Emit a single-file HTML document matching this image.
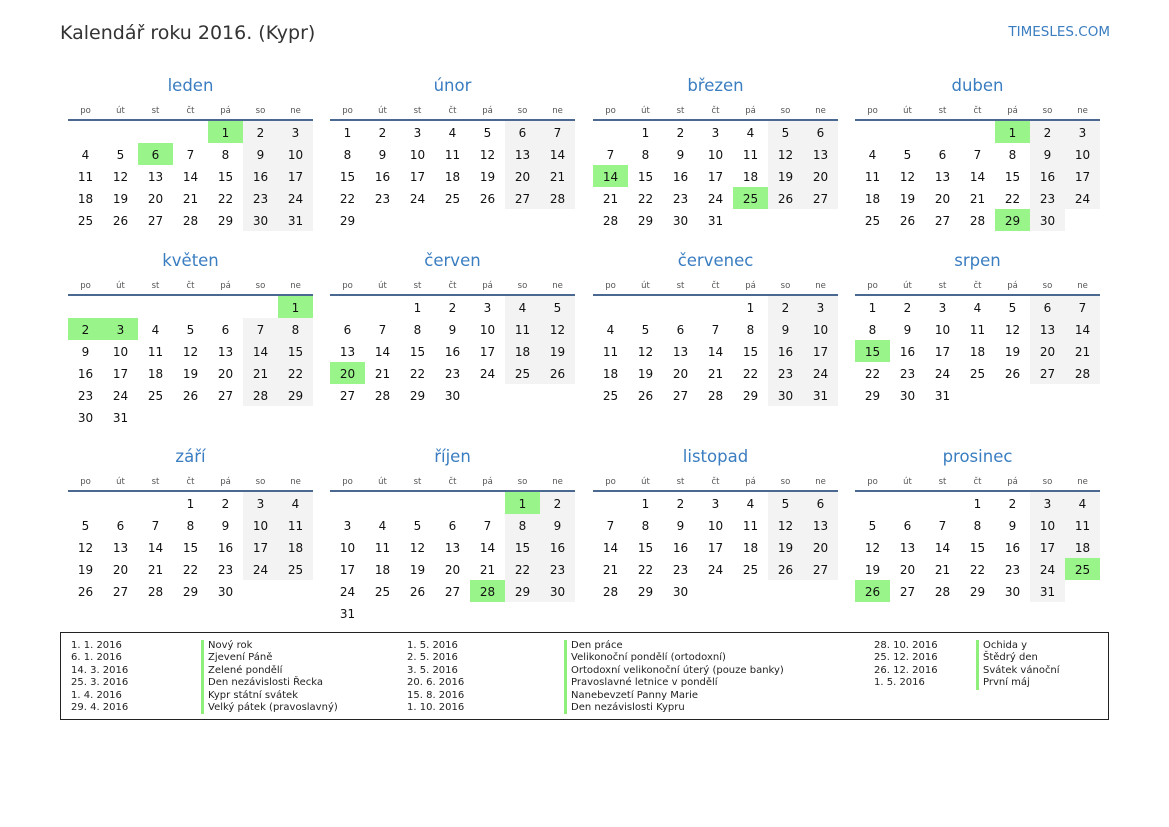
<!DOCTYPE html>
<html><head><meta charset="utf-8"><style>
body{margin:0;width:1169px;height:827px;background:#fff;position:relative;font-family:"DejaVu Sans","Liberation Sans",sans-serif;color:#111;overflow:hidden}
.t{position:absolute;left:60px;top:19px;font-size:19px;color:#333;line-height:28px}
.s{position:absolute;right:59px;top:24px;font-size:13.5px;color:#3a7dc0}
.m{position:absolute;width:245px}
.mt{height:24px;line-height:26px;text-align:center;font-size:16.5px;color:#3a7dc0}
.hd{display:flex;height:22px;line-height:28px;border-bottom:2px solid #4a6890;font-size:8.5px;color:#555}
.hd span{width:35px;text-align:center}
table{border-collapse:collapse;border-spacing:0}
td{width:35px;height:21px;padding:1px 0 0 0;text-align:center;font-size:12px;line-height:20px}
td.w{background:#f3f3f3}
td.h{background:#99f58a}
.lg{position:absolute;left:60px;top:632px;width:1047px;height:86px;border:1.5px solid #222}
.c{position:absolute;top:7px;font-size:10px;line-height:12.4px;color:#222;white-space:nowrap}
.b{border-left:3px solid #8ef07a;padding-left:4px}
</style></head><body>
<div class="t">Kalendář roku 2016. (Kypr)</div>
<div class="s">TIMESLES.COM</div>

<div class="m" style="left:68px;top:73px"><div class="mt">leden</div><div class="hd"><span>po</span><span>út</span><span>st</span><span>čt</span><span>pá</span><span>so</span><span>ne</span></div><table>
<tr><td></td><td></td><td></td><td></td><td class="h">1</td><td class="w">2</td><td class="w">3</td></tr>
<tr><td>4</td><td>5</td><td class="h">6</td><td>7</td><td>8</td><td class="w">9</td><td class="w">10</td></tr>
<tr><td>11</td><td>12</td><td>13</td><td>14</td><td>15</td><td class="w">16</td><td class="w">17</td></tr>
<tr><td>18</td><td>19</td><td>20</td><td>21</td><td>22</td><td class="w">23</td><td class="w">24</td></tr>
<tr><td>25</td><td>26</td><td>27</td><td>28</td><td>29</td><td class="w">30</td><td class="w">31</td></tr></table></div>

<div class="m" style="left:330px;top:73px"><div class="mt">únor</div><div class="hd"><span>po</span><span>út</span><span>st</span><span>čt</span><span>pá</span><span>so</span><span>ne</span></div><table>
<tr><td>1</td><td>2</td><td>3</td><td>4</td><td>5</td><td class="w">6</td><td class="w">7</td></tr>
<tr><td>8</td><td>9</td><td>10</td><td>11</td><td>12</td><td class="w">13</td><td class="w">14</td></tr>
<tr><td>15</td><td>16</td><td>17</td><td>18</td><td>19</td><td class="w">20</td><td class="w">21</td></tr>
<tr><td>22</td><td>23</td><td>24</td><td>25</td><td>26</td><td class="w">27</td><td class="w">28</td></tr>
<tr><td>29</td><td></td><td></td><td></td><td></td><td></td><td></td></tr></table></div>

<div class="m" style="left:593px;top:73px"><div class="mt">březen</div><div class="hd"><span>po</span><span>út</span><span>st</span><span>čt</span><span>pá</span><span>so</span><span>ne</span></div><table>
<tr><td></td><td>1</td><td>2</td><td>3</td><td>4</td><td class="w">5</td><td class="w">6</td></tr>
<tr><td>7</td><td>8</td><td>9</td><td>10</td><td>11</td><td class="w">12</td><td class="w">13</td></tr>
<tr><td class="h">14</td><td>15</td><td>16</td><td>17</td><td>18</td><td class="w">19</td><td class="w">20</td></tr>
<tr><td>21</td><td>22</td><td>23</td><td>24</td><td class="h">25</td><td class="w">26</td><td class="w">27</td></tr>
<tr><td>28</td><td>29</td><td>30</td><td>31</td><td></td><td></td><td></td></tr></table></div>

<div class="m" style="left:855px;top:73px"><div class="mt">duben</div><div class="hd"><span>po</span><span>út</span><span>st</span><span>čt</span><span>pá</span><span>so</span><span>ne</span></div><table>
<tr><td></td><td></td><td></td><td></td><td class="h">1</td><td class="w">2</td><td class="w">3</td></tr>
<tr><td>4</td><td>5</td><td>6</td><td>7</td><td>8</td><td class="w">9</td><td class="w">10</td></tr>
<tr><td>11</td><td>12</td><td>13</td><td>14</td><td>15</td><td class="w">16</td><td class="w">17</td></tr>
<tr><td>18</td><td>19</td><td>20</td><td>21</td><td>22</td><td class="w">23</td><td class="w">24</td></tr>
<tr><td>25</td><td>26</td><td>27</td><td>28</td><td class="h">29</td><td class="w">30</td><td></td></tr></table></div>

<div class="m" style="left:68px;top:248px"><div class="mt">květen</div><div class="hd"><span>po</span><span>út</span><span>st</span><span>čt</span><span>pá</span><span>so</span><span>ne</span></div><table>
<tr><td></td><td></td><td></td><td></td><td></td><td></td><td class="h">1</td></tr>
<tr><td class="h">2</td><td class="h">3</td><td>4</td><td>5</td><td>6</td><td class="w">7</td><td class="w">8</td></tr>
<tr><td>9</td><td>10</td><td>11</td><td>12</td><td>13</td><td class="w">14</td><td class="w">15</td></tr>
<tr><td>16</td><td>17</td><td>18</td><td>19</td><td>20</td><td class="w">21</td><td class="w">22</td></tr>
<tr><td>23</td><td>24</td><td>25</td><td>26</td><td>27</td><td class="w">28</td><td class="w">29</td></tr>
<tr><td>30</td><td>31</td><td></td><td></td><td></td><td></td><td></td></tr></table></div>

<div class="m" style="left:330px;top:248px"><div class="mt">červen</div><div class="hd"><span>po</span><span>út</span><span>st</span><span>čt</span><span>pá</span><span>so</span><span>ne</span></div><table>
<tr><td></td><td></td><td>1</td><td>2</td><td>3</td><td class="w">4</td><td class="w">5</td></tr>
<tr><td>6</td><td>7</td><td>8</td><td>9</td><td>10</td><td class="w">11</td><td class="w">12</td></tr>
<tr><td>13</td><td>14</td><td>15</td><td>16</td><td>17</td><td class="w">18</td><td class="w">19</td></tr>
<tr><td class="h">20</td><td>21</td><td>22</td><td>23</td><td>24</td><td class="w">25</td><td class="w">26</td></tr>
<tr><td>27</td><td>28</td><td>29</td><td>30</td><td></td><td></td><td></td></tr></table></div>

<div class="m" style="left:593px;top:248px"><div class="mt">červenec</div><div class="hd"><span>po</span><span>út</span><span>st</span><span>čt</span><span>pá</span><span>so</span><span>ne</span></div><table>
<tr><td></td><td></td><td></td><td></td><td>1</td><td class="w">2</td><td class="w">3</td></tr>
<tr><td>4</td><td>5</td><td>6</td><td>7</td><td>8</td><td class="w">9</td><td class="w">10</td></tr>
<tr><td>11</td><td>12</td><td>13</td><td>14</td><td>15</td><td class="w">16</td><td class="w">17</td></tr>
<tr><td>18</td><td>19</td><td>20</td><td>21</td><td>22</td><td class="w">23</td><td class="w">24</td></tr>
<tr><td>25</td><td>26</td><td>27</td><td>28</td><td>29</td><td class="w">30</td><td class="w">31</td></tr></table></div>

<div class="m" style="left:855px;top:248px"><div class="mt">srpen</div><div class="hd"><span>po</span><span>út</span><span>st</span><span>čt</span><span>pá</span><span>so</span><span>ne</span></div><table>
<tr><td>1</td><td>2</td><td>3</td><td>4</td><td>5</td><td class="w">6</td><td class="w">7</td></tr>
<tr><td>8</td><td>9</td><td>10</td><td>11</td><td>12</td><td class="w">13</td><td class="w">14</td></tr>
<tr><td class="h">15</td><td>16</td><td>17</td><td>18</td><td>19</td><td class="w">20</td><td class="w">21</td></tr>
<tr><td>22</td><td>23</td><td>24</td><td>25</td><td>26</td><td class="w">27</td><td class="w">28</td></tr>
<tr><td>29</td><td>30</td><td>31</td><td></td><td></td><td></td><td></td></tr></table></div>

<div class="m" style="left:68px;top:444px"><div class="mt">září</div><div class="hd"><span>po</span><span>út</span><span>st</span><span>čt</span><span>pá</span><span>so</span><span>ne</span></div><table>
<tr><td></td><td></td><td></td><td>1</td><td>2</td><td class="w">3</td><td class="w">4</td></tr>
<tr><td>5</td><td>6</td><td>7</td><td>8</td><td>9</td><td class="w">10</td><td class="w">11</td></tr>
<tr><td>12</td><td>13</td><td>14</td><td>15</td><td>16</td><td class="w">17</td><td class="w">18</td></tr>
<tr><td>19</td><td>20</td><td>21</td><td>22</td><td>23</td><td class="w">24</td><td class="w">25</td></tr>
<tr><td>26</td><td>27</td><td>28</td><td>29</td><td>30</td><td></td><td></td></tr></table></div>

<div class="m" style="left:330px;top:444px"><div class="mt">říjen</div><div class="hd"><span>po</span><span>út</span><span>st</span><span>čt</span><span>pá</span><span>so</span><span>ne</span></div><table>
<tr><td></td><td></td><td></td><td></td><td></td><td class="h">1</td><td class="w">2</td></tr>
<tr><td>3</td><td>4</td><td>5</td><td>6</td><td>7</td><td class="w">8</td><td class="w">9</td></tr>
<tr><td>10</td><td>11</td><td>12</td><td>13</td><td>14</td><td class="w">15</td><td class="w">16</td></tr>
<tr><td>17</td><td>18</td><td>19</td><td>20</td><td>21</td><td class="w">22</td><td class="w">23</td></tr>
<tr><td>24</td><td>25</td><td>26</td><td>27</td><td class="h">28</td><td class="w">29</td><td class="w">30</td></tr>
<tr><td>31</td><td></td><td></td><td></td><td></td><td></td><td></td></tr></table></div>

<div class="m" style="left:593px;top:444px"><div class="mt">listopad</div><div class="hd"><span>po</span><span>út</span><span>st</span><span>čt</span><span>pá</span><span>so</span><span>ne</span></div><table>
<tr><td></td><td>1</td><td>2</td><td>3</td><td>4</td><td class="w">5</td><td class="w">6</td></tr>
<tr><td>7</td><td>8</td><td>9</td><td>10</td><td>11</td><td class="w">12</td><td class="w">13</td></tr>
<tr><td>14</td><td>15</td><td>16</td><td>17</td><td>18</td><td class="w">19</td><td class="w">20</td></tr>
<tr><td>21</td><td>22</td><td>23</td><td>24</td><td>25</td><td class="w">26</td><td class="w">27</td></tr>
<tr><td>28</td><td>29</td><td>30</td><td></td><td></td><td></td><td></td></tr></table></div>

<div class="m" style="left:855px;top:444px"><div class="mt">prosinec</div><div class="hd"><span>po</span><span>út</span><span>st</span><span>čt</span><span>pá</span><span>so</span><span>ne</span></div><table>
<tr><td></td><td></td><td></td><td>1</td><td>2</td><td class="w">3</td><td class="w">4</td></tr>
<tr><td>5</td><td>6</td><td>7</td><td>8</td><td>9</td><td class="w">10</td><td class="w">11</td></tr>
<tr><td>12</td><td>13</td><td>14</td><td>15</td><td>16</td><td class="w">17</td><td class="w">18</td></tr>
<tr><td>19</td><td>20</td><td>21</td><td>22</td><td>23</td><td class="w">24</td><td class="h">25</td></tr>
<tr><td class="h">26</td><td>27</td><td>28</td><td>29</td><td>30</td><td class="w">31</td><td></td></tr></table></div>

<div class="lg">
<div class="c" style="left:10px">1. 1. 2016<br>6. 1. 2016<br>14. 3. 2016<br>25. 3. 2016<br>1. 4. 2016<br>29. 4. 2016</div>
<div class="c b" style="left:140px">Nový rok<br>Zjevení Páně<br>Zelené pondělí<br>Den nezávislosti Řecka<br>Kypr státní svátek<br>Velký pátek (pravoslavný)</div>
<div class="c" style="left:346px">1. 5. 2016<br>2. 5. 2016<br>3. 5. 2016<br>20. 6. 2016<br>15. 8. 2016<br>1. 10. 2016</div>
<div class="c b" style="left:503px">Den práce<br>Velikonoční pondělí (ortodoxní)<br>Ortodoxní velikonoční úterý (pouze banky)<br>Pravoslavné letnice v pondělí<br>Nanebevzetí Panny Marie<br>Den nezávislosti Kypru</div>
<div class="c" style="left:813px">28. 10. 2016<br>25. 12. 2016<br>26. 12. 2016<br>1. 5. 2016</div>
<div class="c b" style="left:915px;height:49.6px">Ochida y<br>Štědrý den<br>Svátek vánoční<br>První máj</div>
</div>
</body></html>
